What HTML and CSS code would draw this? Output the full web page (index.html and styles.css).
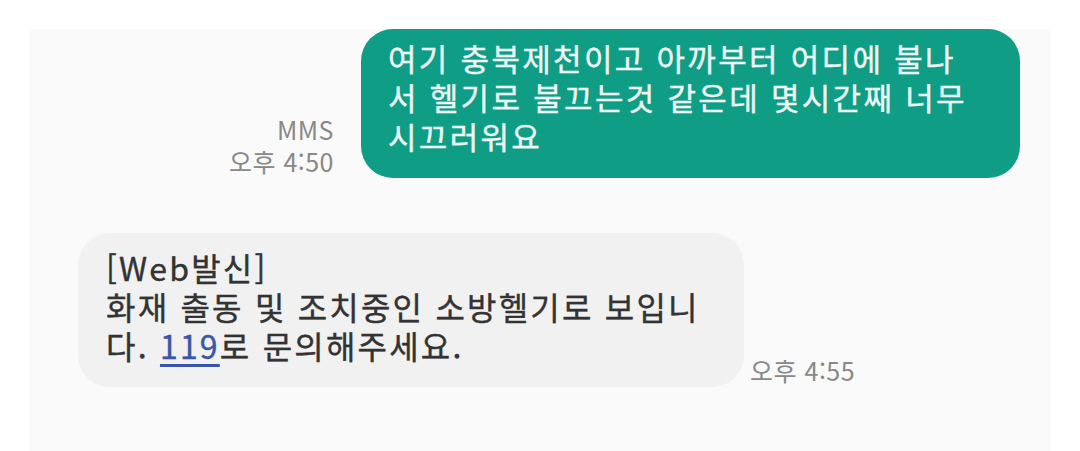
FILE: index.html
```html
<!DOCTYPE html>
<html lang="ko">
<head>
  <meta charset="UTF-8">
  <title>메시지</title>
  <meta name="viewport" content="width=device-width, initial-scale=1.0">
  <link rel="stylesheet" href="styles.css">
</head>
<body>
  <div class="thread">
    <div class="row sent">
      <div class="meta">
        <span>MMS</span>
        <span>오후 4:50</span>
      </div>
      <div class="bubble green">여기 충북제천이고 아까부터 어디에 불나<br>서 헬기로 불끄는것 같은데 몇시간째 너무<br>시끄러워요</div>
    </div>

    <div class="row received">
      <div class="bubble gray">[Web발신]<br>화재 출동 및 조치중인 소방헬기로 보입니<br>다. <a class="link" href="#">119</a>로 문의해주세요.</div>
      <div class="meta">
        <span>오후 4:55</span>
      </div>
    </div>
  </div>
</body>
</html>
```

FILE: styles.css
```css
:root {
  --panel: #fafafa;
  --green: #109d85;
  --green-text: #eef9f5;
  --gray: #f1f1f1;
  --text: #333333;
  --meta: #888888;
}

html, body {
  height: 100%;
}

body {
  margin: 0;
  background-color: #ffffff;
  font-family: "Noto Sans CJK KR", "Noto Sans", sans-serif;
  overflow: hidden;
}

.thread {
  margin: 29px 29px 0 29px;
  min-height: calc(100% - 29px);
  background-color: var(--panel);
  display: flex;
  flex-direction: column;
  gap: 55px;
}

.row {
  display: flex;
  align-items: flex-end;
}

.row.sent {
  justify-content: flex-end;
  gap: 27px;
  padding-right: 31px;
}

.row.received {
  justify-content: flex-start;
  gap: 6px;
  padding-left: 49px;
}

.bubble {
  line-height: 39px;
  white-space: nowrap;
  border-radius: 32px;
  -webkit-text-stroke: 0.4px currentColor;
}

.bubble.green {
  width: 605px;
  font-size: 31px;
  letter-spacing: 2.3px;
  background-color: var(--green);
  color: var(--green-text);
  padding: 9px 27px 23px 27px;
}

.bubble.gray {
  width: 610px;
  font-size: 32px;
  letter-spacing: 2.2px;
  background-color: var(--gray);
  color: var(--text);
  padding: 15px 28px 22px 28px;
}

.link {
  color: #3b55a8;
  text-decoration: underline;
  text-underline-offset: 5px;
}

.meta {
  display: flex;
  flex-direction: column;
  align-items: flex-end;
  font-size: 25px;
  line-height: 32px;
  letter-spacing: 0.5px;
  color: var(--meta);
  margin-bottom: 1px;
}
```
